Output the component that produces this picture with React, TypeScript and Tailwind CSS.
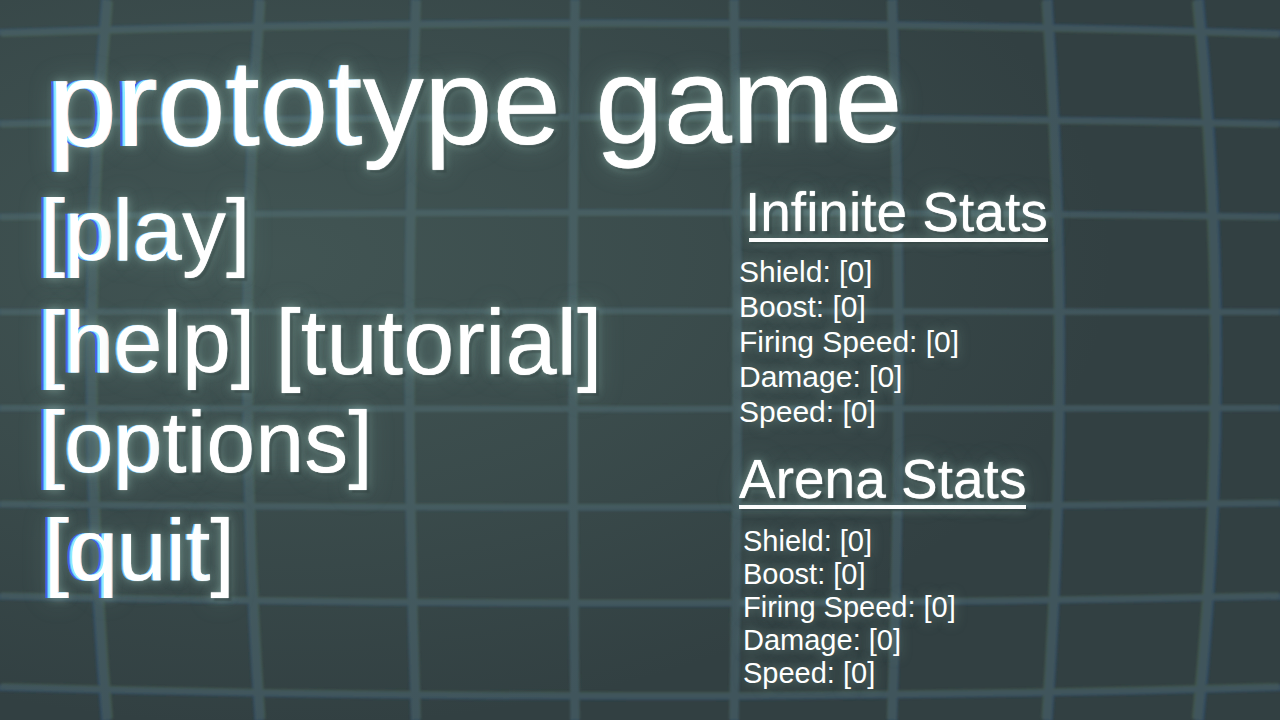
import clsx from 'clsx';

const COLUMNS = [
  'M107 0 Q76 360 107 720',
  'M260 0 Q235 360 260 720',
  'M416 0 Q403 360 416 720',
  'M575 0 Q571 360 575 720',
  'M734 0 Q740 360 734 720',
  'M892 0 Q905 360 892 720',
  'M1047 0 Q1072 360 1047 720',
  'M1198 0 Q1234 360 1198 720',
];

const ROWS = [
  'M0 33 Q640 13 1280 34',
  'M0 124 Q640 111 1280 124',
  'M0 217 Q640 208 1280 217',
  'M0 312 Q640 310 1280 312',
  'M0 408 Q640 410 1280 408',
  'M0 504 Q640 511 1280 503',
  'M0 596 Q640 610 1280 596',
  'M0 687 Q640 705 1280 687',
];

const STATS = ['Shield', 'Boost', 'Firing Speed', 'Damage', 'Speed'];

const GLOW =
  '[text-shadow:0_0_1px_#fff,3px_3px_2px_#26353470,0_0_10px_#a4d0c490,0_0_26px_#8fbcb066]';
const FRINGE_STRONG =
  '[text-shadow:-2px_0_#8cecff,-3px_0_#5cb4ff,-5px_0_#4460e8,1px_0_#ffdccf,0_0_10px_#a4d0c490,0_0_26px_#8fbcb066]';
const FRINGE_SOFT =
  '[text-shadow:-1px_0_#8fe4ff,-2px_0_#4f9cf0,0_0_1px_#ffe6d6,0_0_10px_#a4d0c490,0_0_26px_#8fbcb066]';

interface FringedTextProps {
  strong: string;
  soft: string;
  rest: string;
}

// The lens splits colours near the left edge and settles further in
function FringedText({ strong, soft, rest }: FringedTextProps) {
  return (
    <>
      <span className={FRINGE_STRONG}>{strong}</span>
      <span className={FRINGE_SOFT}>{soft}</span>
      <span className={GLOW}>{rest}</span>
    </>
  );
}

function GridLines() {
  return (
    <>
      <g strokeWidth="9">
        {COLUMNS.map((d) => (
          <path key={d} d={d} />
        ))}
      </g>
      <g strokeWidth="6">
        {ROWS.map((d) => (
          <path key={d} d={d} />
        ))}
      </g>
    </>
  );
}

function Backdrop() {
  return (
    <svg
      className="absolute inset-0 -z-10 h-full w-full"
      viewBox="0 0 1280 720"
      preserveAspectRatio="none"
      fill="none"
      aria-hidden="true">
      <defs>
        <radialGradient id="haze" cx="0.22" cy="0.36" r="0.65">
          <stop offset="0" stopColor="#5d7a73" stopOpacity="0.36" />
          <stop offset="0.5" stopColor="#5d7a73" stopOpacity="0.2" />
          <stop offset="1" stopColor="#5d7a73" stopOpacity="0" />
        </radialGradient>
        <filter id="soften">
          <feGaussianBlur stdDeviation="0.8" />
        </filter>
      </defs>
      <g filter="url(#soften)">
        <g stroke="#2e4a62" transform="translate(640 360) scale(1.003) translate(-640 -360)">
          <GridLines />
        </g>
        <g stroke="#42574b" transform="translate(640 360) scale(0.997) translate(-640 -360)">
          <GridLines />
        </g>
        <g stroke="#41555c">
          <GridLines />
        </g>
      </g>
      <rect width="1280" height="720" fill="url(#haze)" />
    </svg>
  );
}

interface StatsBlockProps {
  title: string;
  headingClass: string;
  listClass: string;
}

function StatsBlock({ title, headingClass, listClass }: StatsBlockProps) {
  return (
    <section>
      <h2
        className={clsx(
          'w-fit text-[55px] leading-[52px] whitespace-nowrap after:block after:h-1 after:bg-white after:shadow-[2px_2px_2px_#26353480,0_0_10px_#a4d0c480]',
          GLOW,
          headingClass,
        )}>
        {title}
      </h2>
      <ul className={clsx('[text-shadow:0_0_12px_#9cc8bc80]', listClass)}>
        {STATS.map((stat) => (
          <li key={stat}>{stat}: [0]</li>
        ))}
      </ul>
    </section>
  );
}

export default function App() {
  return (
    <div className="relative isolate min-h-screen overflow-hidden bg-[#324042] pt-8 pl-10 font-['Liberation_Sans',Arial,sans-serif] text-white">
      <Backdrop />

      <h1 className="ml-2 w-fit rotate-[-0.3deg] text-[123px] leading-[140px] whitespace-nowrap">
        <FringedText strong="pr" soft="otot" rest="ype game" />
      </h1>

      <main className="grid grid-cols-[699fr_541fr]">
        {/* Menu */}
        <nav className="flex flex-col items-start text-[88px] leading-[100px] whitespace-nowrap">
          <button type="button" className="mt-2">
            <FringedText strong="[p" soft="la" rest="y]" />
          </button>
          <div className="mt-3 flex gap-5">
            <button type="button">
              <FringedText strong="[h" soft="e" rest="lp]" />
            </button>
            <button type="button" className={clsx('text-[92px]', GLOW)}>
              [tutorial]
            </button>
          </div>
          <button type="button">
            <FringedText strong="[" soft="op" rest="tions]" />
          </button>
          <button type="button" className="mt-2 ml-1">
            <FringedText strong="[q" soft="uit" rest="]" />
          </button>
        </nav>

        {/* Stats */}
        <div className="mt-3.5 flex flex-col gap-6">
          <StatsBlock
            title="Infinite Stats"
            headingClass="ml-1.5 after:ml-1"
            listClass="mt-3 text-[30px] leading-[35px]"
          />
          <StatsBlock
            title="Arena Stats"
            headingClass=""
            listClass="mt-4 ml-1 text-[29px] leading-[33px]"
          />
        </div>
      </main>
    </div>
  );
}
